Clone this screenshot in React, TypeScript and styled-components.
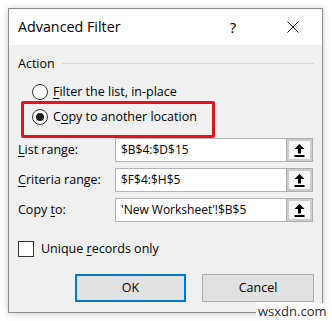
import React from "react";
import styled, { createGlobalStyle } from "styled-components";

const GlobalStyle = createGlobalStyle`
  html, body { margin: 0; padding: 0; background: #ffffff; }
  body { font-family: "Open Sans", "Noto Sans", sans-serif; color: #000; }
  * { box-sizing: border-box; }
`;

const Page = styled.div`
  position: relative;
  width: 332px;
  height: 321px;
  padding: 8px 0 0 8px;
  overflow: hidden;
`;

const Dialog = styled.div`
  width: 315px;
  height: 305px;
  border: 1px solid #8c8c8c;
  box-shadow: 0 0 6px rgba(0, 0, 0, 0.12), 0 2px 8px rgba(0, 0, 0, 0.1);
  display: flex;
  flex-direction: column;
  background: #f0f0f0;
`;

const TitleBar = styled.div`
  height: 36px;
  background: #ffffff;
  display: flex;
  align-items: center;
  padding-left: 9px;
  flex-shrink: 0;
`;

const Title = styled.div`
  font-size: 14.3px;
  line-height: 20px;
  flex: 1;
  padding-bottom: 1px;
`;

const Help = styled.div`
  font-size: 15px;
  line-height: 20px;
  width: 16px;
  text-align: center;
  margin-right: 46px;
  padding-bottom: 1px;
`;

const CloseBtn = styled.div`
  width: 12px;
  height: 12px;
  margin-right: 23px;
  display: flex;
  margin-bottom: 1px;
`;

const Body = styled.div`
  flex: 1;
  display: flex;
  flex-direction: column;
  padding: 10px 8px 9px 9px;
  font-size: 12.5px;
`;

const Legend = styled.div`
  height: 18px;
  display: flex;
  align-items: center;
  gap: 7px;
  line-height: 18px;
  &::after {
    content: "";
    flex: 1;
    height: 1px;
    background: #dadada;
    margin-top: -1px;
  }
`;

const RadioList = styled.div`
  display: flex;
  flex-direction: column;
  gap: 5px;
  margin: 9px 0 0 14px;
`;

const RadioRow = styled.div<{ $highlight?: boolean }>`
  position: relative;
  height: 20px;
  display: flex;
  align-items: center;
  gap: 5px;
  line-height: 20px;
  ${(p) =>
    p.$highlight &&
    `
    &::before {
      content: "";
      position: absolute;
      top: -6px;
      left: -11px;
      width: 188px;
      height: 31px;
      border: 3px solid #e5141b;
      border-radius: 2px;
    }
  `}
`;

const RadioDot = styled.span<{ $checked?: boolean }>`
  width: 16px;
  height: 16px;
  border-radius: 50%;
  border: 1px solid #333333;
  background: #ffffff;
  display: flex;
  align-items: center;
  justify-content: center;
  flex-shrink: 0;
  &::after {
    content: "";
    width: 8px;
    height: 8px;
    border-radius: 50%;
    background: ${(p) => (p.$checked ? "#1a1a1a" : "transparent")};
  }
`;

const Key = styled.span`
  text-decoration: underline;
  text-underline-offset: 2px;
  text-decoration-thickness: 1px;
`;

const Fields = styled.div`
  display: flex;
  flex-direction: column;
  gap: 6px;
  margin-top: 11px;
`;

const FieldRow = styled.div`
  display: grid;
  grid-template-columns: 97px 171px 27px;
  height: 24px;
  align-items: center;
`;

const FieldLabel = styled.label`
  line-height: 20px;
`;

const RangeInput = styled.div`
  height: 24px;
  background: #ffffff;
  border: 1px solid #b3b3b3;
  border-right: none;
  font-size: 12px;
  line-height: 22px;
  padding-left: 5px;
  white-space: nowrap;
  overflow: hidden;
`;

const CollapseBtn = styled.div`
  height: 24px;
  background: #cdcdcd;
  border: 1px solid #adadad;
  padding: 2px;
  display: flex;
`;

const CollapseInner = styled.div`
  flex: 1;
  background: #f7f7f7;
  display: flex;
  align-items: center;
  justify-content: center;
`;

const CheckRow = styled.div`
  margin-top: 19px;
  height: 16px;
  display: flex;
  align-items: center;
  gap: 7px;
  line-height: 18px;
`;

const CheckBox = styled.span`
  width: 16px;
  height: 16px;
  border: 1px solid #333333;
  background: #ffffff;
  flex-shrink: 0;
`;

const ButtonRow = styled.div`
  margin-top: 17px;
  display: flex;
  justify-content: flex-end;
  gap: 16px;
`;

const Button = styled.div<{ $default?: boolean; $w: number }>`
  width: ${(p) => p.$w}px;
  height: 28px;
  background: #e1e1e1;
  border: ${(p) => (p.$default ? "2px solid #0078d7" : "1px solid #adadad")};
  display: flex;
  align-items: center;
  justify-content: center;
  font-size: 12.5px;
  line-height: 18px;
`;

const Watermark = styled.div`
  position: absolute;
  left: 256px;
  top: 303px;
  width: 68px;
  height: 18px;
  background: #ffffff;
  font-family: "Open Sans", sans-serif;
  font-size: 13px;
  line-height: 16px;
  color: #2b2b2b;
  padding-left: 2px;
`;

const UploadIcon = () => (
  <svg width="11" height="14" viewBox="0 0 11 14">
    <polygon points="5.5,1 10.5,6 0.5,6" fill="#000" />
    <rect x="4" y="5.5" width="3" height="5" fill="#000" />
    <rect x="0.5" y="12" width="10" height="2" fill="#000" />
  </svg>
);

const CloseIcon = () => (
  <svg width="12" height="12" viewBox="0 0 12 12">
    <path d="M0.5 0.5 L11.5 11.5 M11.5 0.5 L0.5 11.5" stroke="#111" strokeWidth="1" fill="none" />
  </svg>
);

const fields: { label: React.ReactNode; value: string }[] = [
  { label: <><Key>L</Key>ist range:</>, value: "$B$4:$D$15" },
  { label: <><Key>C</Key>riteria range:</>, value: "$F$4:$H$5" },
  { label: <>Copy <Key>t</Key>o:</>, value: "'New Worksheet'!$B$5" },
];

export default function App() {
  return (
    <>
      <GlobalStyle />
      <Page>
        <Dialog>
          <TitleBar>
            <Title>Advanced Filter</Title>
            <Help>?</Help>
            <CloseBtn>
              <CloseIcon />
            </CloseBtn>
          </TitleBar>
          <Body>
            <Legend>Action</Legend>
            <RadioList>
              <RadioRow>
                <RadioDot />
                <span>
                  <Key>F</Key>ilter the list, in-place
                </span>
              </RadioRow>
              <RadioRow $highlight>
                <RadioDot $checked />
                <span>
                  C<Key>o</Key>py to another location
                </span>
              </RadioRow>
            </RadioList>
            <Fields>
              {fields.map((f, i) => (
                <FieldRow key={i}>
                  <FieldLabel>{f.label}</FieldLabel>
                  <RangeInput>{f.value}</RangeInput>
                  <CollapseBtn>
                    <CollapseInner>
                      <UploadIcon />
                    </CollapseInner>
                  </CollapseBtn>
                </FieldRow>
              ))}
            </Fields>
            <CheckRow>
              <CheckBox />
              <span>
                Unique <Key>r</Key>ecords only
              </span>
            </CheckRow>
            <ButtonRow>
              <Button $default $w={111}>OK</Button>
              <Button $w={112}>Cancel</Button>
            </ButtonRow>
          </Body>
        </Dialog>
        <Watermark>wsxdn.com</Watermark>
      </Page>
    </>
  );
}
